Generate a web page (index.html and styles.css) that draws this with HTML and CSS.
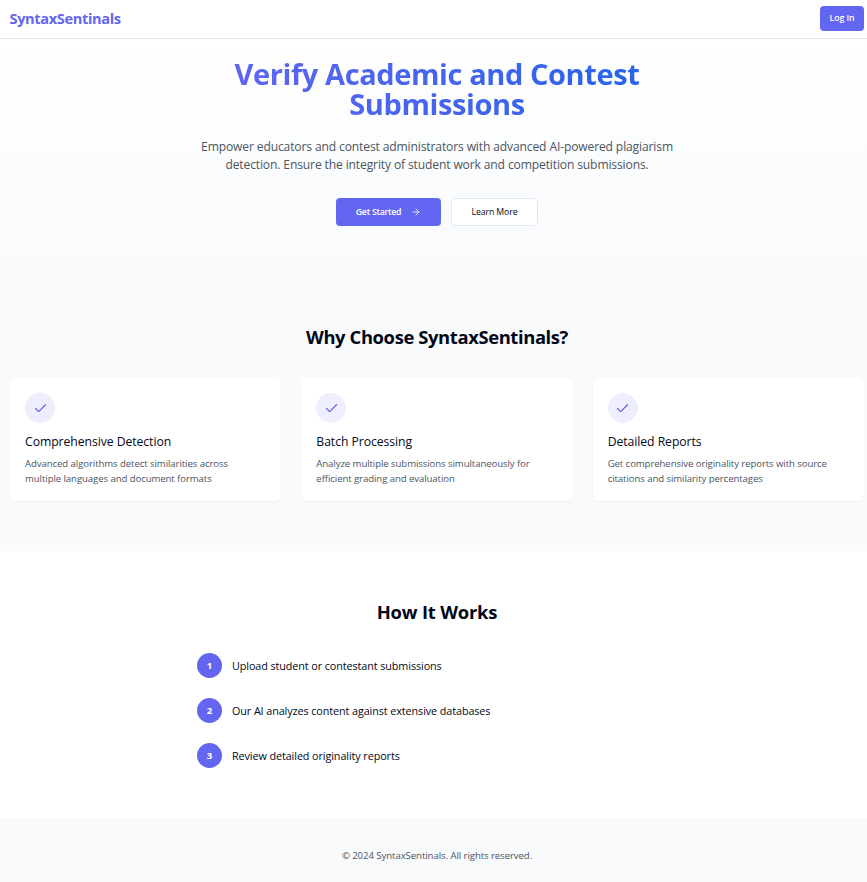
FILE: index.html
```html
<!DOCTYPE html>
<html lang="en">
<head>
<meta charset="utf-8">
<title>SyntaxSentinals</title>
<link rel="stylesheet" href="styles.css">
</head>
<body>
<div class="page">
  <header class="header">
    <div class="logo">SyntaxSentinals</div>
    <button class="btn btn-primary btn-login">Log In</button>
  </header>
  <main>
    <section class="hero">
      <h1 class="hero-title">Verify Academic and Contest<br>Submissions</h1>
      <p class="hero-text">Empower educators and contest administrators with advanced AI-powered plagiarism<br>detection. Ensure the integrity of student work and competition submissions.</p>
      <div class="actions">
        <button class="btn btn-primary btn-start">Get Started
          <svg class="arrow" viewBox="0 0 24 24"><path d="M5 12h14M12 5l7 7-7 7"/></svg>
        </button>
        <button class="btn btn-outline">Learn More</button>
      </div>
    </section>
    <section class="features">
      <h2 class="section-title section-title-tight">Why Choose SyntaxSentinals?</h2>
      <div class="cards">
        <article class="card">
          <div class="badge"><svg viewBox="0 0 24 24"><path d="M20 6 9 17l-5-5"/></svg></div>
          <h3>Comprehensive Detection</h3>
          <p>Advanced algorithms detect similarities across<br>multiple languages and document formats</p>
        </article>
        <article class="card">
          <div class="badge"><svg viewBox="0 0 24 24"><path d="M20 6 9 17l-5-5"/></svg></div>
          <h3>Batch Processing</h3>
          <p>Analyze multiple submissions simultaneously for<br>efficient grading and evaluation</p>
        </article>
        <article class="card">
          <div class="badge"><svg viewBox="0 0 24 24"><path d="M20 6 9 17l-5-5"/></svg></div>
          <h3>Detailed Reports</h3>
          <p>Get comprehensive originality reports with source<br>citations and similarity percentages</p>
        </article>
      </div>
    </section>
    <section class="how">
      <h2 class="section-title">How It Works</h2>
      <ol class="steps">
        <li><span class="num">1</span><span>Upload student or contestant submissions</span></li>
        <li><span class="num">2</span><span>Our AI analyzes content against extensive databases</span></li>
        <li><span class="num">3</span><span>Review detailed originality reports</span></li>
      </ol>
    </section>
  </main>
  <footer class="footer">© 2024 SyntaxSentinals. All rights reserved.</footer>
</div>
</body>
</html>
```
FILE: styles.css
```css
* { box-sizing: border-box; margin: 0; padding: 0; }
html { overflow: hidden; }
body {
  background: #fff;
  color: #020817;
  font-family: "Open Sans", "Noto Sans", sans-serif;
}
.page { width: 874px; }

.header {
  display: flex;
  align-items: center;
  justify-content: space-between;
  height: 39px;
  padding: 0 10px 2px 9.5px;
  border-bottom: 1px solid #e2e8f0;
}
.logo {
  color: #6366f1;
  font-size: 14.6px;
  font-weight: 700;
  letter-spacing: -0.37px;
}

.btn {
  display: inline-flex;
  align-items: center;
  justify-content: center;
  border: 0;
  border-radius: 4px;
  font-family: inherit;
  font-size: 8.75px;
  font-weight: 600;
  white-space: nowrap;
}
.btn-primary { background: #6366f1; color: #fff; }
.btn-login { width: 44px; height: 25px; letter-spacing: -0.08px; }
.btn-start { width: 105px; height: 28px; gap: 10px; letter-spacing: -0.25px; }
.btn-outline {
  width: 87px;
  height: 28px;
  border: 1px solid #e2e8f0;
  background: #fff;
  color: #020817;
  font-weight: 450;
  letter-spacing: -0.12px;
}
.arrow {
  width: 10px;
  height: 10px;
  fill: none;
  stroke: currentColor;
  stroke-width: 2;
  stroke-linecap: round;
  stroke-linejoin: round;
}

.hero {
  height: 237px;
  padding-top: 20px;
  background: linear-gradient(to bottom, #fff, #f8fafc);
  text-align: center;
}
.hero-title {
  width: 480px;
  margin: 0 auto 17px;
  padding-bottom: 2px;
  background: linear-gradient(to right, #6366f1, #2563eb);
  background-clip: text;
  -webkit-background-clip: text;
  color: transparent;
  font-size: 29px;
  font-weight: 700;
  line-height: 30px;
  letter-spacing: -0.4px;
}
.hero-text {
  color: #4b5563;
  font-size: 12.1px;
  line-height: 18px;
  letter-spacing: -0.14px;
}
.actions {
  display: flex;
  justify-content: center;
  gap: 10px;
  margin-top: 24px;
}

.features { height: 275px; padding: 50px 10px; background: #f8fafc; }
.section-title {
  margin-bottom: 29.5px;
  font-size: 18.4px;
  font-weight: 700;
  line-height: 22.5px;
  letter-spacing: -0.2px;
  text-align: center;
}
.section-title-tight { letter-spacing: -0.38px; }
.cards { display: grid; grid-template-columns: repeat(3, 1fr); gap: 20px; }
.card {
  height: 123px;
  padding: 15px;
  border-radius: 6px;
  background: #fff;
  box-shadow: 0 1px 2px rgba(0, 0, 0, 0.05);
}
.badge {
  display: flex;
  align-items: center;
  justify-content: center;
  width: 30px;
  height: 30px;
  margin-bottom: 10px;
  border-radius: 50%;
  background: #efeefe;
}
.badge svg {
  width: 15px;
  height: 15px;
  fill: none;
  stroke: #6366f1;
  stroke-width: 2;
  stroke-linecap: round;
  stroke-linejoin: round;
}
.card h3 {
  margin-bottom: 5px;
  font-size: 12.2px;
  font-weight: 500;
  line-height: 17.5px;
  letter-spacing: -0.05px;
}
.card p {
  color: #4b5563;
  font-size: 9.6px;
  line-height: 15px;
  letter-spacing: -0.08px;
}

.how { height: 267px; padding-top: 50px; background: #fff; }
.steps {
  display: flex;
  flex-direction: column;
  gap: 20px;
  width: 480px;
  margin: 0 auto;
  list-style: none;
}
.steps li {
  display: flex;
  align-items: center;
  gap: 10px;
  font-size: 10.8px;
  letter-spacing: -0.09px;
}
.num {
  display: flex;
  align-items: center;
  justify-content: center;
  width: 25px;
  height: 25px;
  border-radius: 50%;
  background: #6366f1;
  color: #fff;
  font-size: 9.6px;
  font-weight: 700;
  letter-spacing: 0;
}

.footer {
  height: 64px;
  padding-top: 30px;
  background: #f8fafc;
  color: #4b5563;
  font-size: 9.6px;
  line-height: 15px;
  letter-spacing: -0.07px;
  text-align: center;
}
```
